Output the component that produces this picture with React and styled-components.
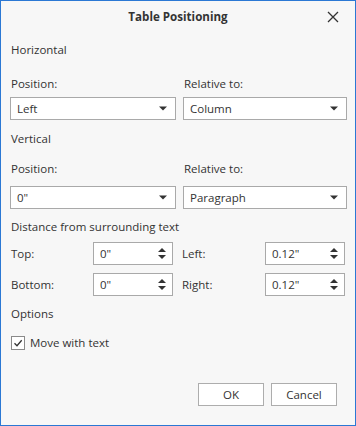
import React from "react";
import styled, { createGlobalStyle } from "styled-components";

const Global = createGlobalStyle`
  html, body { margin: 0; padding: 0; background: #f7f7f7; }
  body { font-family: "Segoe UI", "Open Sans", "Noto Sans", sans-serif; }
`;

const Dialog = styled.div`
  box-sizing: border-box;
  width: 356px;
  height: 426px;
  border: 1px solid #2b78d4;
  background: #f7f7f7;
  color: #333;
  font-size: 11.5px;
  display: flex;
  flex-direction: column;
`;

const TitleBar = styled.div`
  height: 31px;
  display: flex;
  align-items: center;
  justify-content: center;
  position: relative;
  font-weight: 700;
  font-size: 11.6px;
  color: #333;
`;

const Close = styled.button`
  position: absolute;
  right: 14px;
  top: 8px;
  width: 16px;
  height: 16px;
  padding: 0;
  border: 0;
  background: transparent;
  display: flex;
  align-items: center;
  justify-content: center;
`;

const Body = styled.div`
  padding: 0 9px 0 9px;
  display: flex;
  flex-direction: column;
`;

const Section = styled.div`
  line-height: 16px;
  padding-left: 1px;
  margin-top: ${(p) => p.$mt}px;
`;

const TwoCol = styled.div`
  display: grid;
  grid-template-columns: 166px 164px;
  column-gap: 7px;
  margin-top: ${(p) => p.$mt}px;
`;

const Label = styled.div`
  line-height: 16px;
  padding-left: ${(p) => p.$pl || 1}px;
`;

const Select = styled.div`
  box-sizing: border-box;
  height: 23px;
  margin-top: ${(p) => p.$mt || 0}px;
  background: #fff;
  border: 1px solid #a9a9a9;
  display: flex;
  align-items: center;
  padding: 0 8px 0 6px;
  justify-content: space-between;
`;

const SpinGrid = styled.div`
  display: grid;
  grid-template-columns: 83px 80px 92px 80px;
  row-gap: 8px;
  margin-top: ${(p) => p.$mt}px;
  align-items: center;
`;

const Spin = styled.div`
  box-sizing: border-box;
  height: 23px;
  background: #fff;
  border: 1px solid #a9a9a9;
  display: flex;
  align-items: center;
  justify-content: space-between;
  padding: 0 6px 0 6px;
`;

const CheckRow = styled.label`
  display: flex;
  align-items: center;
  gap: 5px;
  margin-top: ${(p) => p.$mt}px;
  padding-left: 1px;
`;

const Box = styled.span`
  box-sizing: border-box;
  width: 14px;
  height: 14px;
  border: 1px solid #8a8a8a;
  background: #fff;
  display: flex;
  align-items: center;
  justify-content: center;
`;

const Footer = styled.div`
  margin-top: auto;
  padding: 0 18px 19px 0;
  display: flex;
  justify-content: flex-end;
  gap: 7px;
`;

const Button = styled.button`
  box-sizing: border-box;
  width: 66px;
  height: 23px;
  border: 1px solid #adadad;
  background: #fff;
  font-family: inherit;
  font-size: 11.5px;
  color: #333;
  padding: 0;
`;

const DownArrow = () => (
  <svg width="8" height="5" viewBox="0 0 8 5">
    <path d="M0 0.5H8L4 4.5Z" fill="#333" />
  </svg>
);

const SpinArrows = () => (
  <svg width="8" height="13" viewBox="0 0 8 13">
    <path d="M0 5H8L4 1Z" fill="#333" />
    <path d="M0 8H8L4 12Z" fill="#333" />
  </svg>
);

export default function App() {
  return (
    <>
      <Global />
      <Dialog>
        <TitleBar>
          Table Positioning
          <Close aria-label="Close">
            <svg width="12" height="12" viewBox="0 0 12 12">
              <path d="M1 1L11 11M11 1L1 11" stroke="#333" strokeWidth="1.3" />
            </svg>
          </Close>
        </TitleBar>
        <Body>
          <Section $mt={10}>Horizontal</Section>
          <TwoCol $mt={18}>
            <Label>Position:</Label>
            <Label $pl={0}>Relative to:</Label>
            <Select $mt={5}>Left<DownArrow /></Select>
            <Select $mt={5}>Column<DownArrow /></Select>
          </TwoCol>
          <Section $mt={11}>Vertical</Section>
          <TwoCol $mt={14}>
            <Label>Position:</Label>
            <Label $pl={0}>Relative to:</Label>
            <Select $mt={9}>0"<DownArrow /></Select>
            <Select $mt={9}>Paragraph<DownArrow /></Select>
          </TwoCol>
          <Section $mt={10}>Distance from surrounding text</Section>
          <SpinGrid $mt={7}>
            <Label>Top:</Label>
            <Spin>0"<SpinArrows /></Spin>
            <Label $pl={9}>Left:</Label>
            <Spin>0.12"<SpinArrows /></Spin>
            <Label>Bottom:</Label>
            <Spin>0"<SpinArrows /></Spin>
            <Label $pl={9}>Right:</Label>
            <Spin>0.12"<SpinArrows /></Spin>
          </SpinGrid>
          <Section $mt={10}>Options</Section>
          <CheckRow $mt={13}>
            <Box>
              <svg width="10" height="10" viewBox="0 0 10 10">
                <path d="M1.5 5.2L4 7.7L8.7 2.3" stroke="#333" strokeWidth="1.3" fill="none" />
              </svg>
            </Box>
            Move with text
          </CheckRow>
        </Body>
        <Footer>
          <Button>OK</Button>
          <Button>Cancel</Button>
        </Footer>
      </Dialog>
    </>
  );
}
